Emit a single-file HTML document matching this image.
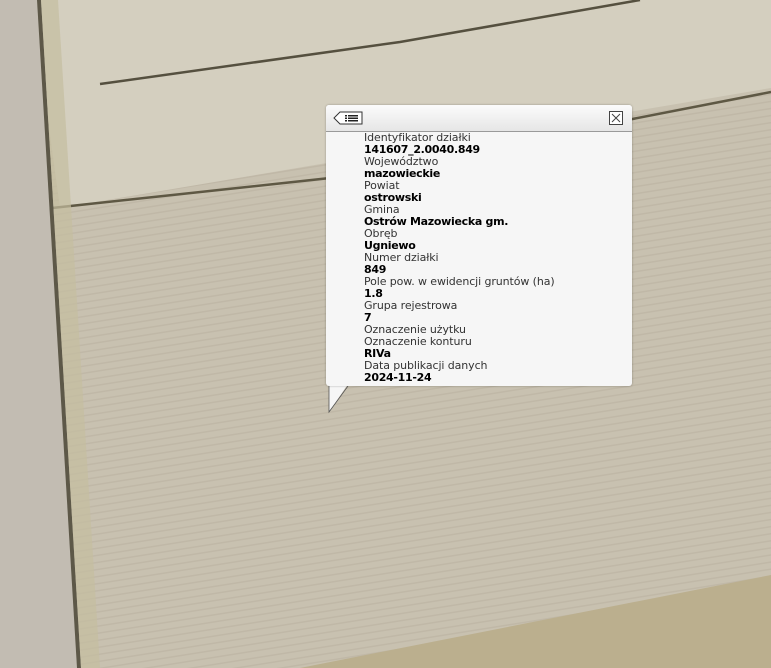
<!DOCTYPE html>
<html><head><meta charset="utf-8"><style>
html,body{margin:0;padding:0;width:771px;height:668px;overflow:hidden;background:#c6bfae}
#bg{position:absolute;left:0;top:0}
.pop{position:absolute;left:326px;top:105px;width:306px;height:281px;background:#f6f6f6;border-radius:3px;box-shadow:0 0 2px rgba(0,0,0,.3);font-family:"DejaVu Sans","Liberation Sans",sans-serif;font-size:11px;line-height:12px;color:#333}
.hd{height:26px;border-bottom:1px solid #9a9a9a;background:linear-gradient(#fbfbfb,#e6e6e6);border-radius:3px 3px 0 0;position:relative}
.body{padding:0 0 0 38px}
.body div{white-space:nowrap;letter-spacing:-0.1px}
.body b{color:#000;letter-spacing:-0.3px}
</style></head><body>
<svg id="bg" width="771" height="668">
<defs>
<pattern id="st" width="771" height="7" patternUnits="userSpaceOnUse" patternTransform="rotate(-9)">
<rect width="771" height="7" fill="#c8c1b0"/><rect y="3" width="771" height="1.5" fill="#b7b09e" opacity=".5"/>
</pattern>
</defs>
<rect width="771" height="668" fill="url(#st)"/>
<polygon points="40,0 771,0 771,88 60,208 48,120" fill="#d4cfbf"/>
<polyline points="100,84 400,42 640,0" stroke="#55503f" stroke-width="2.5" fill="none"/>
<polyline points="52,208 330,178 771,92" stroke="#5e5844" stroke-width="2.5" fill="none"/>
<polygon points="0,0 37,0 79,668 0,668" fill="#c2bcb2"/>
<polygon points="37,0 41,0 81,668 77,668" fill="#5d5848"/>
<polygon points="41,0 58,0 100,668 81,668" fill="#c4be9f" opacity=".7"/>
<polygon points="300,668 771,575 771,668" fill="#bbaf8e"/>
</svg>
<svg style="position:absolute;left:326px;top:384px" width="26" height="30"><polygon points="3,0 22,0 3,28" fill="#f6f6f6"/><polyline points="3,0 3,28 22,2" stroke="#555" stroke-width="0.8" fill="none"/></svg>
<div class="pop">
<div class="hd">
<svg style="position:absolute;left:7px;top:6px" width="30" height="14"><path d="M7 1 H29 V13 H7 L1 7 Z" fill="#fff" stroke="#333" stroke-width="1"/><rect x="12" y="4" width="2" height="1.5" fill="#222"/><rect x="15" y="4" width="10" height="1.5" fill="#222"/><rect x="12" y="6.5" width="2" height="1.5" fill="#222"/><rect x="15" y="6.5" width="10" height="1.5" fill="#222"/><rect x="12" y="9" width="2" height="1.5" fill="#222"/><rect x="15" y="9" width="10" height="1.5" fill="#222"/></svg>
<svg style="position:absolute;left:283px;top:6px" width="15" height="15"><rect x=".5" y=".5" width="13" height="13" fill="#fff" stroke="#444"/><path d="M3 3 L11 11 M11 3 L3 11" stroke="#444"/></svg>
</div>
<div class="body">
<div>Identyfikator działki</div><div><b>141607_2.0040.849</b></div>
<div>Województwo</div><div><b>mazowieckie</b></div>
<div>Powiat</div><div><b>ostrowski</b></div>
<div>Gmina</div><div><b>Ostrów Mazowiecka gm.</b></div>
<div>Obręb</div><div><b>Ugniewo</b></div>
<div>Numer działki</div><div><b>849</b></div>
<div>Pole pow. w ewidencji gruntów (ha)</div><div><b>1.8</b></div>
<div>Grupa rejestrowa</div><div><b>7</b></div>
<div>Oznaczenie użytku</div>
<div>Oznaczenie konturu</div><div><b>RIVa</b></div>
<div>Data publikacji danych</div><div><b>2024-11-24</b></div>
</div>
</div>
</body></html>
